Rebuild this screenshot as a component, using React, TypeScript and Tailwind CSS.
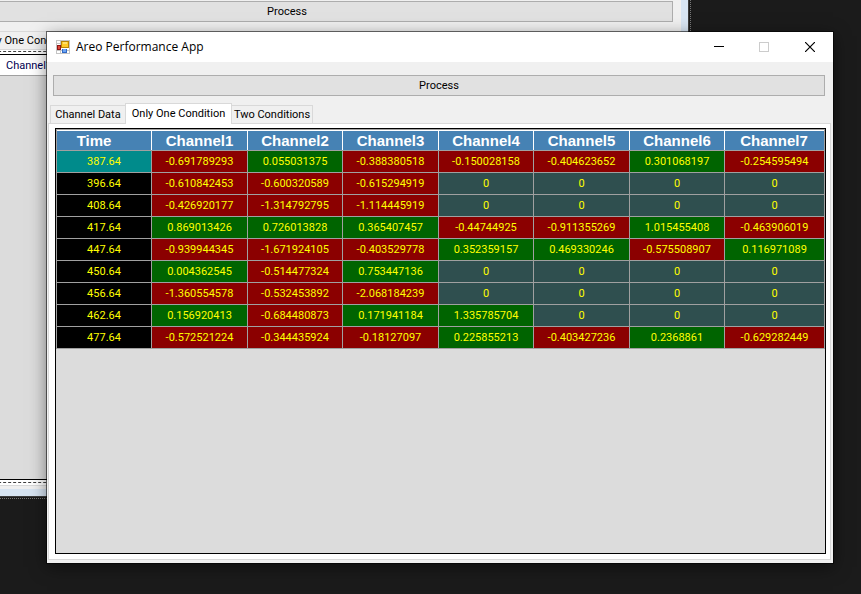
import type { ReactNode } from 'react';

const columns = ['Time', 'Channel1', 'Channel2', 'Channel3', 'Channel4', 'Channel5', 'Channel6', 'Channel7'];

const rows = [
  ['387.64', '-0.691789293', '0.055031375', '-0.388380518', '-0.150028158', '-0.404623652', '0.301068197', '-0.254595494'],
  ['396.64', '-0.610842453', '-0.600320589', '-0.615294919', '0', '0', '0', '0'],
  ['408.64', '-0.426920177', '-1.314792795', '-1.114445919', '0', '0', '0', '0'],
  ['417.64', '0.869013426', '0.726013828', '0.365407457', '-0.44744925', '-0.911355269', '1.015455408', '-0.463906019'],
  ['447.64', '-0.939944345', '-1.671924105', '-0.403529778', '0.352359157', '0.469330246', '-0.575508907', '0.116971089'],
  ['450.64', '0.004362545', '-0.514477324', '0.753447136', '0', '0', '0', '0'],
  ['456.64', '-1.360554578', '-0.532453892', '-2.068184239', '0', '0', '0', '0'],
  ['462.64', '0.156920413', '-0.684480873', '0.171941184', '1.335785704', '0', '0', '0'],
  ['477.64', '-0.572521224', '-0.344435924', '-0.18127097', '0.225855213', '-0.403427236', '0.2368861', '-0.629282449'],
];

function cellColor(value: string, row: number, col: number) {
  if (col === 0) return row === 0 ? 'bg-[#008b8b]' : 'bg-black';
  const n = Number(value);
  if (n === 0) return 'bg-[#2f4f4f]';
  return n > 0 ? 'bg-[#006400]' : 'bg-[#8b0000]';
}

function ProcessButton() {
  return (
    <button type="button" className="block h-[21px] w-full border border-[#adadad] bg-[#e1e1e1] text-center leading-[19px]">
      Process
    </button>
  );
}

function Tab({ active = false, className, children }: { active?: boolean; className: string; children: ReactNode }) {
  return (
    <button
      type="button"
      role="tab"
      aria-selected={active}
      className={`border border-b-0 border-[#d9d9d9] leading-[17px] whitespace-nowrap ${
        active ? 'relative -mx-px -mb-px h-[21px] bg-white pb-[2px]' : 'h-[18px] bg-[#f0f0f0]'
      } ${className}`}
    >
      {children}
    </button>
  );
}

function AppIcon() {
  return (
    <svg className="size-[14px]" viewBox="0 0 14 14" aria-hidden="true" shapeRendering="crispEdges">
      <rect x="0.5" y="0.5" width="13" height="13" fill="#fff" stroke="#c4c4c4" />
      <path d="M4.5 0V14M0 10.5H14M0 3.5H5" stroke="#c4c4c4" />
      <rect x="1" y="5" width="4" height="5" fill="#8e1515" />
      <rect x="2" y="6" width="2" height="3" fill="#e0483a" />
      <rect x="5" y="1" width="8" height="7" fill="#b98306" />
      <rect x="6" y="2" width="6" height="5" fill="#ffc928" />
      <rect x="7" y="2" width="4" height="2" fill="#ffe06c" />
      <rect x="6" y="9" width="5" height="4" fill="#3168c4" />
      <rect x="7" y="9" width="3" height="3" fill="#6ba4f5" />
    </svg>
  );
}

function DataGrid() {
  return (
    <table className="w-full table-fixed border-separate border-spacing-0 border border-b-0 border-[#a0a0a0] text-center">
      <colgroup>
        <col className="w-[95px]" />
        <col className="w-[96px]" />
        <col className="w-[95px]" />
        <col className="w-[96px]" />
        <col className="w-[95px]" />
        <col className="w-[96px]" />
        <col className="w-[95px]" />
        <col />
      </colgroup>
      <thead>
        <tr>
          {columns.map((name, i) => (
            <th
              key={name}
              scope="col"
              className="h-[21px] border-t border-b border-t-white border-b-[#a0a0a0] bg-[#4682b4] p-0 font-['Liberation_Sans',Arial,sans-serif] text-[15px] leading-[19px] font-bold text-white"
            >
              <div className={`border-r ${i === 7 ? 'border-transparent' : 'border-white'} ${i === 0 ? 'pr-[20px]' : ''}`}>{name}</div>
            </th>
          ))}
        </tr>
      </thead>
      <tbody>
        {rows.map((row, r) => (
          <tr key={row[0]}>
            {row.map((value, c) => (
              <td
                key={c}
                className={`h-[22px] border-b border-[#a0a0a0] p-0 leading-[21px] text-[#ffff00] ${c === 7 ? '' : 'border-r'} ${cellColor(value, r, c)}`}
              >
                {value}
              </td>
            ))}
          </tr>
        ))}
      </tbody>
    </table>
  );
}

function BackgroundWindow() {
  return (
    <section
      aria-label="Channel viewer"
      className="absolute -top-[74px] -left-[113px] flex h-[571px] w-[802px] flex-col border border-[#3c3c3c] bg-[#d7e4f2] px-[7px] pb-[7px] outline outline-offset-1 outline-dotted outline-[#777777]"
    >
      <div className="flex min-h-0 flex-1 flex-col bg-[#f0f0f0] pt-[74px] pb-[3px]">
        <div className="pr-2 pl-[6px]">
          <ProcessButton />
        </div>
        <div role="tablist" className="mt-[7px] flex h-[20px] items-end pl-[3px]">
          <Tab active className="w-[78px]">Channel Data</Tab>
          <Tab className="w-[106px]">Only One Condition</Tab>
        </div>
        <div className="mr-[2px] ml-px flex min-h-0 flex-1 flex-col border border-[#d9d9d9] bg-white px-px pt-px pb-[2px]">
          <div className="flex min-h-0 flex-1 flex-col border border-dashed border-[#404040] p-[2px]">
            <div className="flex-1 border border-black bg-[#dcdcdc]">
              <div className="h-[21px] border-b border-[#a0a0a0] bg-white pl-[104px] leading-[21px] text-[#000050]">Channel1</div>
            </div>
          </div>
        </div>
      </div>
    </section>
  );
}

export default function App() {
  return (
    <main className="relative h-screen overflow-hidden bg-[#1b1b1b] font-[Roboto,'Liberation_Sans',sans-serif] text-[11px] text-black">
      <BackgroundWindow />

      <section
        aria-label="Areo Performance App"
        className="absolute top-[32px] right-[28px] bottom-[31px] left-[47px] flex flex-col bg-[#f0f0f0] shadow-[0_0_0_1px_rgba(0,0,0,0.55),0_4px_16px_rgba(0,0,0,0.5)]"
      >
        <header className="flex h-[30px] shrink-0 items-center bg-white pl-[9px]">
          <AppIcon />
          <h1 className="ml-[6px] flex-1 font-['Open_Sans','Noto_Sans',sans-serif] text-[12px] leading-[16px]">Areo Performance App</h1>
          <button type="button" aria-label="Minimize" className="flex h-full w-[45px] items-center justify-center">
            <svg className="size-[10px]" viewBox="0 0 10 10" shapeRendering="crispEdges">
              <path d="M0 4.5H10" stroke="#000" />
            </svg>
          </button>
          <button type="button" aria-label="Maximize" disabled className="flex h-full w-[46px] items-center justify-center">
            <svg className="size-[10px]" viewBox="0 0 10 10" fill="none">
              <rect x="0.5" y="0.5" width="9" height="9" stroke="#cccccc" />
            </svg>
          </button>
          <button type="button" aria-label="Close" className="flex h-full w-[46px] items-center justify-center">
            <svg className="size-[10px]" viewBox="0 0 10 10" fill="none">
              <path d="M0 0L10 10M10 0L0 10" stroke="#000" strokeWidth="1.2" />
            </svg>
          </button>
        </header>

        <div className="pt-[13px] pr-2 pl-[6px]">
          <ProcessButton />
        </div>

        <div role="tablist" className="mt-[7px] flex h-[20px] items-end pl-[3px]">
          <Tab className="w-[76px]">Channel Data</Tab>
          <Tab active className="w-[107px]">Only One Condition</Tab>
          <Tab className="w-[82px]">Two Conditions</Tab>
        </div>

        <div role="tabpanel" className="mr-[2px] mb-[3px] ml-px flex min-h-0 flex-1 flex-col border border-[#d9d9d9] bg-white pt-[4px] pr-[4px] pb-[5px] pl-[6px]">
          <div className="min-h-0 flex-1 overflow-hidden border border-black bg-[#dcdcdc]">
            <DataGrid />
          </div>
        </div>
      </section>
    </main>
  );
}
